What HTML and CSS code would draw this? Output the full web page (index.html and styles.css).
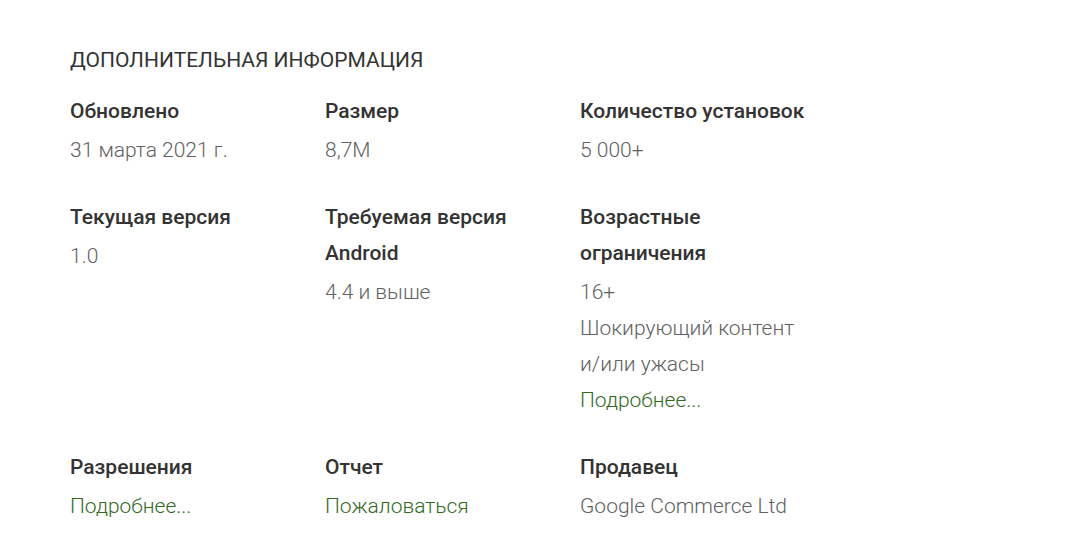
FILE: index.html
```html
<!DOCTYPE html>
<html>

<head>
	<title>Дополнительная информация</title>
	<meta charset="UTF-8">
	<link rel="stylesheet" href="styles.css">
	<meta name="viewport" content="width=device-width, initial-scale=1">
</head>

<body>
	<div class="info">
		<h2 class="info-title">Дополнительная информация</h2>
		<div class="info-grid">
			<div class="item">
				<div class="label">Обновлено</div>
				<div class="value">31 марта 2021 г.</div>
			</div>
			<div class="item">
				<div class="label">Размер</div>
				<div class="value">8,7M</div>
			</div>
			<div class="item">
				<div class="label">Количество установок</div>
				<div class="value">5 000+</div>
			</div>

			<div class="item">
				<div class="label">Текущая версия</div>
				<div class="value">1.0</div>
			</div>
			<div class="item">
				<div class="label">Требуемая версия Android</div>
				<div class="value">4.4 и выше</div>
			</div>
			<div class="item">
				<div class="label">Возрастные ограничения</div>
				<div class="value">
					<div>16+</div>
					<div>Шокирующий контент и/или ужасы</div>
					<a class="link" href="#">Подробнее...</a>
				</div>
			</div>

			<div class="item">
				<div class="label">Разрешения</div>
				<div class="value"><a class="link" href="#">Подробнее...</a></div>
			</div>
			<div class="item">
				<div class="label">Отчет</div>
				<div class="value"><a class="link" href="#">Пожаловаться</a></div>
			</div>
			<div class="item">
				<div class="label">Продавец</div>
				<div class="value">Google Commerce Ltd</div>
			</div>
		</div>
	</div>
</body>

</html>
```

FILE: styles.css
```css
body {
	margin: 0;
	background: #fff;
	font-family: Roboto, "Noto Sans", Arial, sans-serif;
}

.info {
	padding: 44px 0 0 70px;
}

.info-title {
	margin: 0 0 17px;
	font-size: 21px;
	font-weight: 400;
	line-height: 32px;
	text-transform: uppercase;
	color: #333;
}

.info-grid {
	display: grid;
	grid-template-columns: repeat(3, 255px);
	row-gap: 31px;
}

.item {
	width: 230px;
}

.label {
	font-size: 21px;
	font-weight: 500;
	line-height: 36px;
	color: #333;
}

.value {
	margin-top: 3px;
	font-size: 21px;
	font-weight: 300;
	line-height: 36px;
	color: #616161;
}

.link {
	color: #33691e;
	text-decoration: none;
}
```
